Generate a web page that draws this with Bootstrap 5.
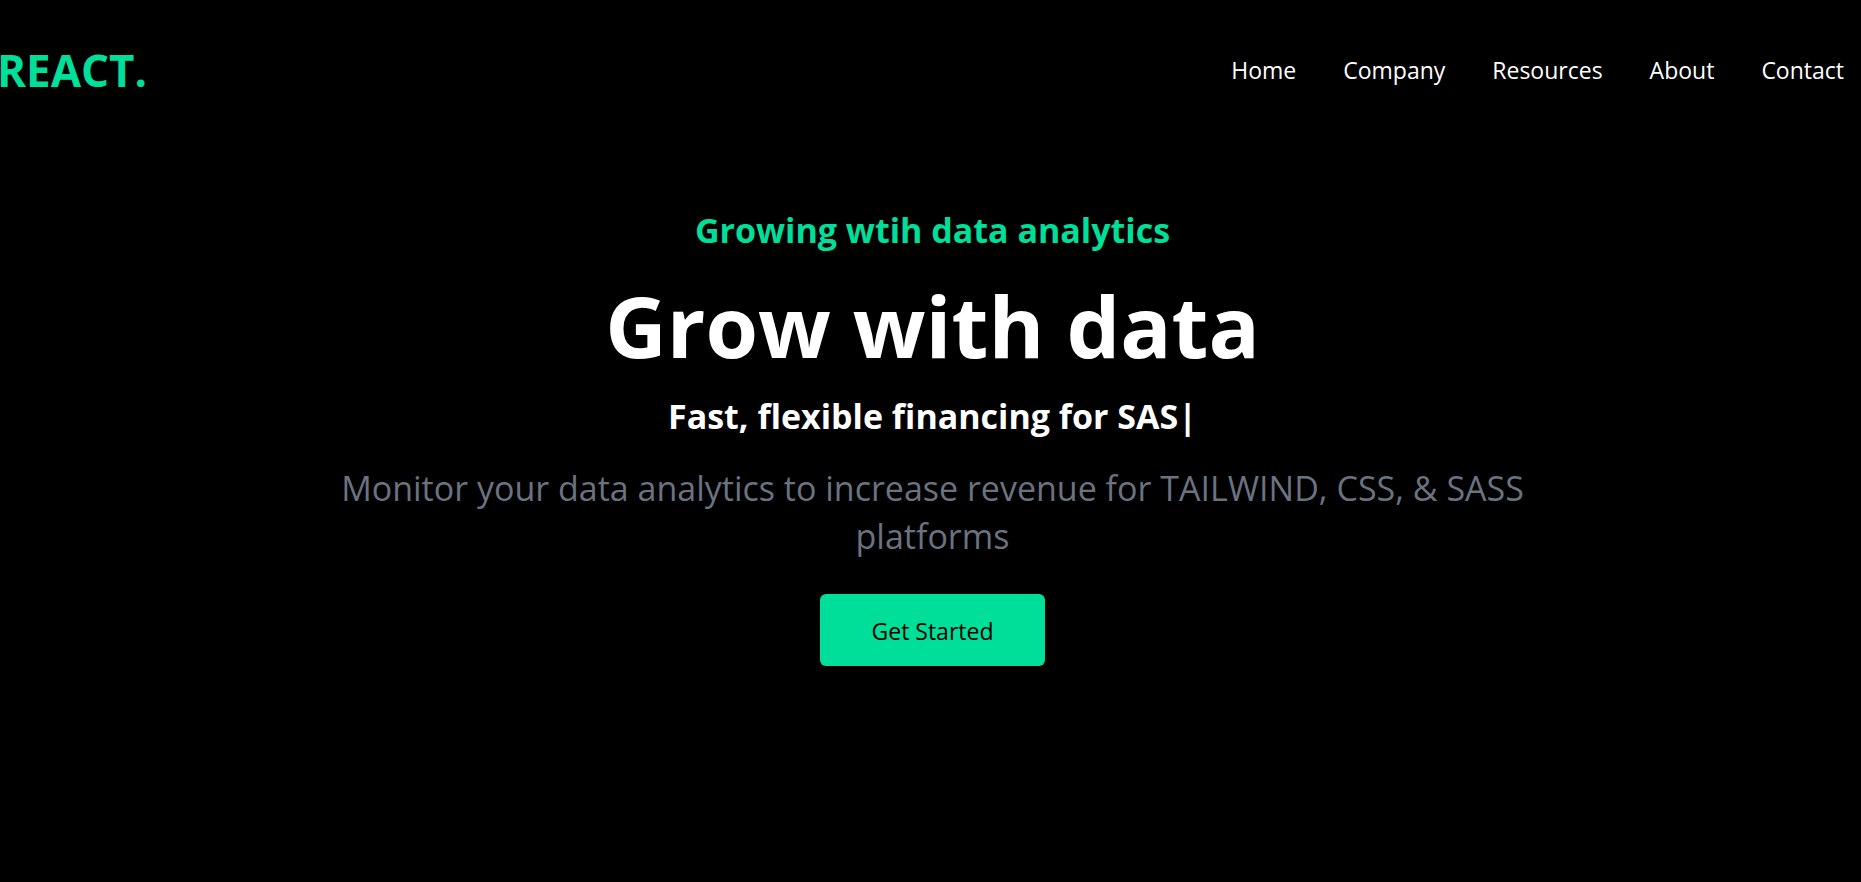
<!DOCTYPE html>
<html lang="en">
<head>
<meta charset="utf-8">
<meta name="viewport" content="width=device-width, initial-scale=1">
<title>REACT.</title>
<link href="https://cdn.jsdelivr.net/npm/bootstrap@5.3.0/dist/css/bootstrap.min.css" rel="stylesheet">
<style>
  :root { --accent: #00df9a; }
  body { font-family: "Open Sans", "Noto Sans", sans-serif; overflow-x: hidden; }
  /* full-bleed shell, slightly wider than the window */
  .shell { margin: 0 -7px 0 -3px; }
  .accent-text, .accent-text:hover { color: var(--accent); }
  .site-header { height: 140px; }
  .brand-name { font-size: 44px; line-height: 48px; }
  .site-menu { font-size: 23px; line-height: 36px; gap: 47px; padding-right: 24px; }
  .hero { padding-top: 66px; }
  .hero-kicker, .hero-typed { font-size: 34px; line-height: 48px; }
  .hero-kicker { margin-bottom: 16px; }
  .hero-title { font-size: 85px; line-height: 110px; margin-bottom: 12px; }
  .hero-typed { margin-bottom: 24px; }
  .hero-copy { font-size: 34px; line-height: 48px; color: #6b7280; max-width: 1240px; margin-bottom: 34px; }
  .btn-start { --bs-btn-bg: var(--accent); --bs-btn-color: #000; --bs-btn-hover-bg: #00c98b; --bs-btn-hover-color: #000;
    --bs-btn-border-width: 0; --bs-btn-border-radius: 6px; --bs-btn-font-size: 23px; --bs-btn-font-weight: 500;
    width: 225px; height: 72px; padding-top: 8px; }
</style>
</head>
<body class="bg-black text-white">
<div class="shell">
  <header class="site-header d-flex align-items-center justify-content-between">
    <a class="brand-name accent-text fw-bold text-decoration-none" href="#">REACT.</a>
    <nav aria-label="Main">
      <ul class="site-menu list-unstyled d-flex mb-0">
        <li><a class="text-white text-decoration-none" href="#">Home</a></li>
        <li><a class="text-white text-decoration-none" href="#">Company</a></li>
        <li><a class="text-white text-decoration-none" href="#">Resources</a></li>
        <li><a class="text-white text-decoration-none" href="#">About</a></li>
        <li><a class="text-white text-decoration-none" href="#">Contact</a></li>
      </ul>
    </nav>
  </header>
  <main class="hero d-flex flex-column align-items-center text-center">
    <p class="hero-kicker accent-text fw-bold">Growing wtih data analytics</p>
    <h1 class="hero-title fw-bold">Grow with data</h1>
    <p class="hero-typed fw-bold">Fast, flexible financing for SAS|</p>
    <p class="hero-copy">Monitor your data analytics to increase revenue for TAILWIND, CSS, &amp; SASS platforms</p>
    <button type="button" class="btn btn-start">Get Started</button>
  </main>
</div>
<script src="https://cdn.jsdelivr.net/npm/bootstrap@5.3.0/dist/js/bootstrap.bundle.min.js"></script>
</body>
</html>
